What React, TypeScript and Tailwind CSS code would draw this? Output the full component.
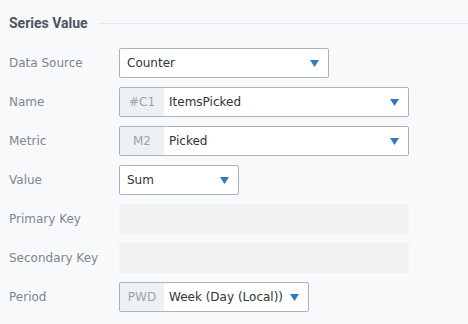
import React from 'react';

const Caret = () => (
  <svg width="9" height="7" viewBox="0 0 9 7" className="shrink-0">
    <path d="M0 0 H9 L4.5 7 Z" fill="#2e7bbf" />
  </svg>
);

function Row({ label, children }: { label: string; children: React.ReactNode }) {
  return (
    <div className="flex items-center h-[30px]">
      <div className="w-[110px] shrink-0 text-[12px] text-[#7d8691]">{label}</div>
      {children}
    </div>
  );
}

function Select({ value, width, prefix }: { value: string; width: string; prefix?: string }) {
  return (
    <div className={`${width} h-[30px] flex items-stretch bg-white border border-[#aab3bc] rounded-[2px] overflow-hidden`}>
      {prefix && (
        <div className="w-[44px] shrink-0 bg-[#eef1f4] flex items-center justify-center text-[12px] text-[#9ba4ae]">
          {prefix}
        </div>
      )}
      <div className={`flex-1 flex items-center justify-between ${prefix ? 'pl-[5px]' : 'pl-[7px]'} pr-[9px] text-[12px] text-[#333]`}>
        <span>{value}</span>
        <Caret />
      </div>
    </div>
  );
}

export default function App() {
  return (
    <div className="w-[468px] h-[324px] bg-[#f8f9fb] font-['DejaVu_Sans',sans-serif]">
      <div className="flex items-center pl-[9px] pt-[12px] h-[34px]">
        <span className="font-['Roboto',sans-serif] text-[14px] font-bold text-[#4b5563]">Series Value</span>
        <div className="flex-1 ml-[11px] h-px bg-[#e6e8eb]" />
      </div>
      <div className="flex flex-col gap-[9px] pl-[9px] pt-[14px]">
        <Row label="Data Source">
          <Select value="Counter" width="w-[210px]" />
        </Row>
        <Row label="Name">
          <Select value="ItemsPicked" prefix="#C1" width="w-[290px]" />
        </Row>
        <Row label="Metric">
          <Select value="Picked" prefix="M2" width="w-[290px]" />
        </Row>
        <Row label="Value">
          <Select value="Sum" width="w-[120px]" />
        </Row>
        <Row label="Primary Key">
          <div className="w-[290px] h-[30px] bg-[#f1f2f4]" />
        </Row>
        <Row label="Secondary Key">
          <div className="w-[290px] h-[30px] bg-[#f1f2f4]" />
        </Row>
        <Row label="Period">
          <Select value="Week (Day (Local))" prefix="PWD" width="w-[190px]" />
        </Row>
      </div>
    </div>
  );
}
